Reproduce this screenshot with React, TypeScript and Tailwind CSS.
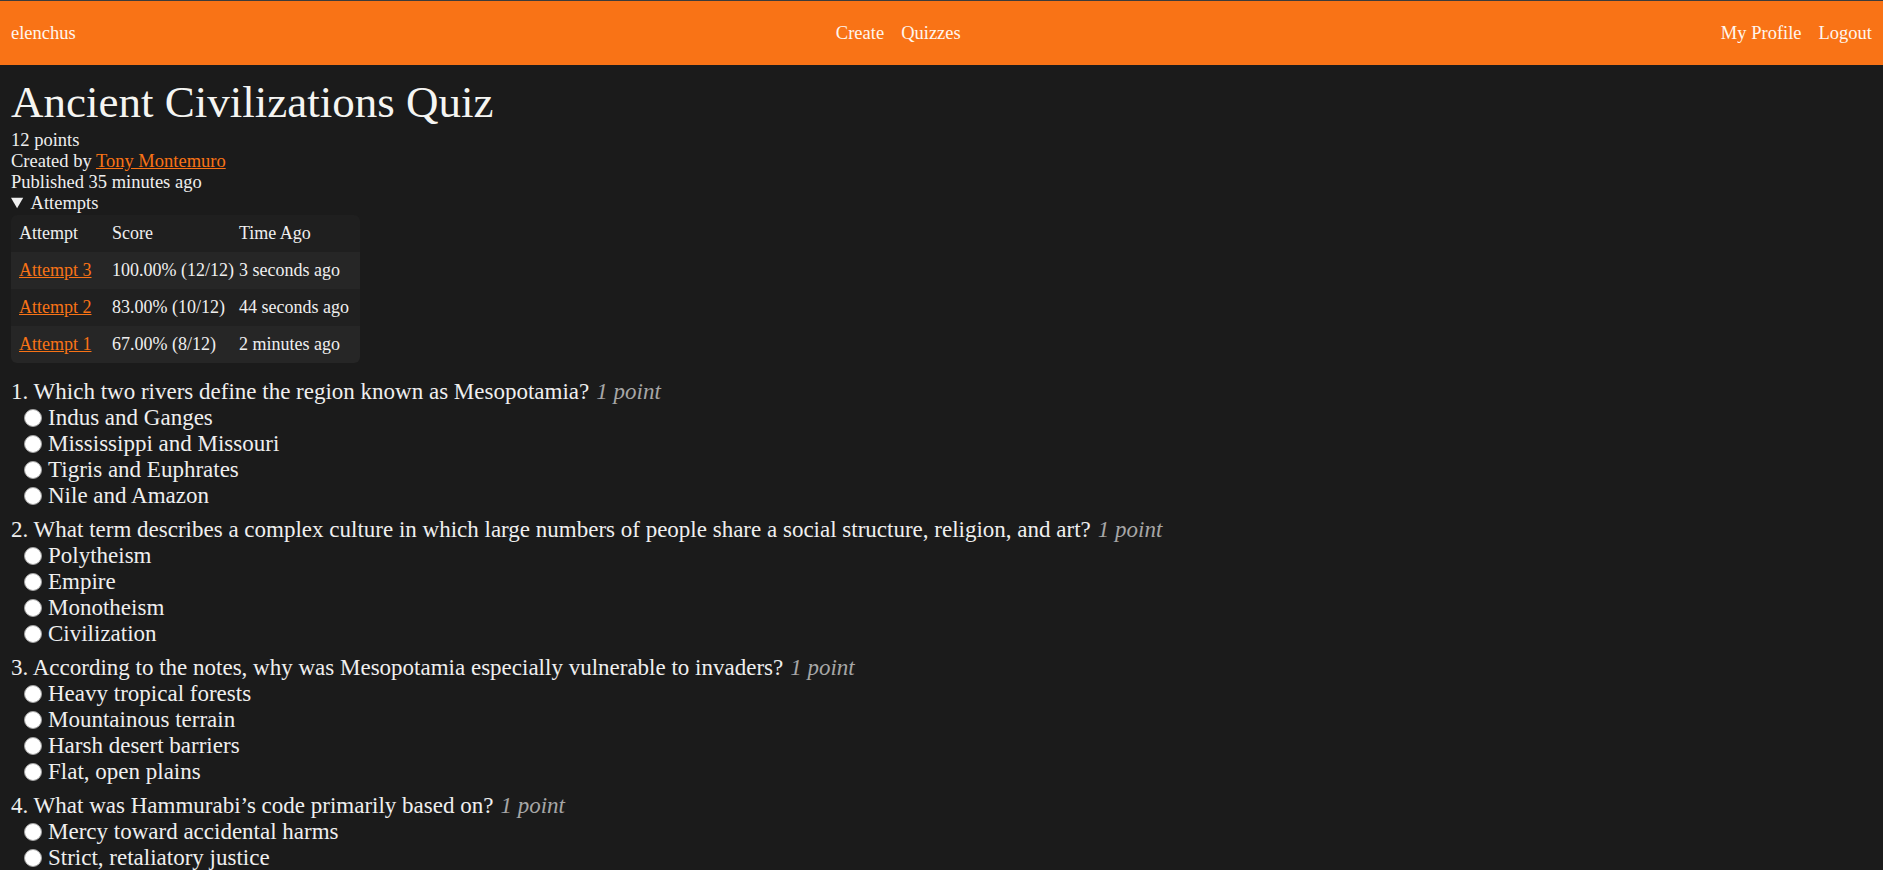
import React from "react";

const questions = [
  {
    q: "Which two rivers define the region known as Mesopotamia?",
    opts: ["Indus and Ganges", "Mississippi and Missouri", "Tigris and Euphrates", "Nile and Amazon"],
  },
  {
    q: "What term describes a complex culture in which large numbers of people share a social structure, religion, and art?",
    opts: ["Polytheism", "Empire", "Monotheism", "Civilization"],
  },
  {
    q: "According to the notes, why was Mesopotamia especially vulnerable to invaders?",
    opts: ["Heavy tropical forests", "Mountainous terrain", "Harsh desert barriers", "Flat, open plains"],
  },
  {
    q: "What was Hammurabi\u2019s code primarily based on?",
    opts: [
      "Mercy toward accidental harms",
      "Strict, retaliatory justice",
      "Equality for every social class",
      "Religious forgiveness",
    ],
  },
];

const attempts = [
  { name: "Attempt 3", score: "100.00% (12/12)", ago: "3 seconds ago" },
  { name: "Attempt 2", score: "83.00% (10/12)", ago: "44 seconds ago" },
  { name: "Attempt 1", score: "67.00% (8/12)", ago: "2 minutes ago" },
];

export default function App() {
  return (
    <div className="min-h-screen bg-[#1b1b1b] text-[#efefef] font-['Liberation_Serif',serif]">
      <nav className="h-[65px] border-t border-[#3c3c3c] bg-[#f97316] px-[11px] flex items-center justify-between text-[18.5px] leading-[21px] text-[#fff6ee]">
        <a href="#">elenchus</a>
        <div className="flex gap-[17px]">
          <a href="#">Create</a>
          <a href="#">Quizzes</a>
        </div>
        <div className="flex gap-[17px]">
          <a href="#">My Profile</a>
          <a href="#">Logout</a>
        </div>
      </nav>

      <main className="px-[11px]">
        <h1 className="mt-[11px] mb-[2px] text-[45px] leading-[52px] text-[#f5f5f2]">
          Ancient Civilizations Quiz
        </h1>
        <div className="text-[18.5px] leading-[21px]">
          <div>12 points</div>
          <div>
            Created by{" "}
            <a href="#" className="text-[#f97316] underline">
              Tony Montemuro
            </a>
          </div>
          <div>Published 35 minutes ago</div>
          <details open>
            <summary className="cursor-pointer">Attempts</summary>
            <div className="mt-[1px] w-fit rounded-md overflow-hidden">
              <table className="table-fixed w-[349px] border-collapse text-[18px] leading-[21px]">
                <thead>
                  <tr className="bg-[#1f1f1f]">
                    <th className="w-[93px] px-2 py-2 text-left font-normal">Attempt</th>
                    <th className="w-[127px] px-2 py-2 text-left font-normal">Score</th>
                    <th className="w-[129px] px-2 py-2 text-left font-normal">Time Ago</th>
                  </tr>
                </thead>
                <tbody>
                  {attempts.map((a, i) => (
                    <tr key={a.name} className={i % 2 === 0 ? "bg-[#262626]" : "bg-[#202020]"}>
                      <td className="px-2 py-2 whitespace-nowrap">
                        <a href="#" className="text-[#f97316] underline">
                          {a.name}
                        </a>
                      </td>
                      <td className="px-2 py-2 whitespace-nowrap">{a.score}</td>
                      <td className="px-2 py-2 whitespace-nowrap">{a.ago}</td>
                    </tr>
                  ))}
                </tbody>
              </table>
            </div>
          </details>
        </div>

        <div className="mt-[16px] text-[23px] leading-[26px]">
          {questions.map((item, qi) => (
            <div key={qi} className="mb-2">
              <div>
                {qi + 1}. {item.q}
                <span className="ml-[7px] italic text-[#a6a6a6]">1 point</span>
              </div>
              {item.opts.map((o) => (
                <label key={o} className="flex items-center gap-[6px] pl-[13px]">
                  <span className="w-[18px] h-[18px] rounded-full bg-white border border-[#a0a0a0] shrink-0" />
                  <span>{o}</span>
                </label>
              ))}
            </div>
          ))}
        </div>
      </main>
    </div>
  );
}
